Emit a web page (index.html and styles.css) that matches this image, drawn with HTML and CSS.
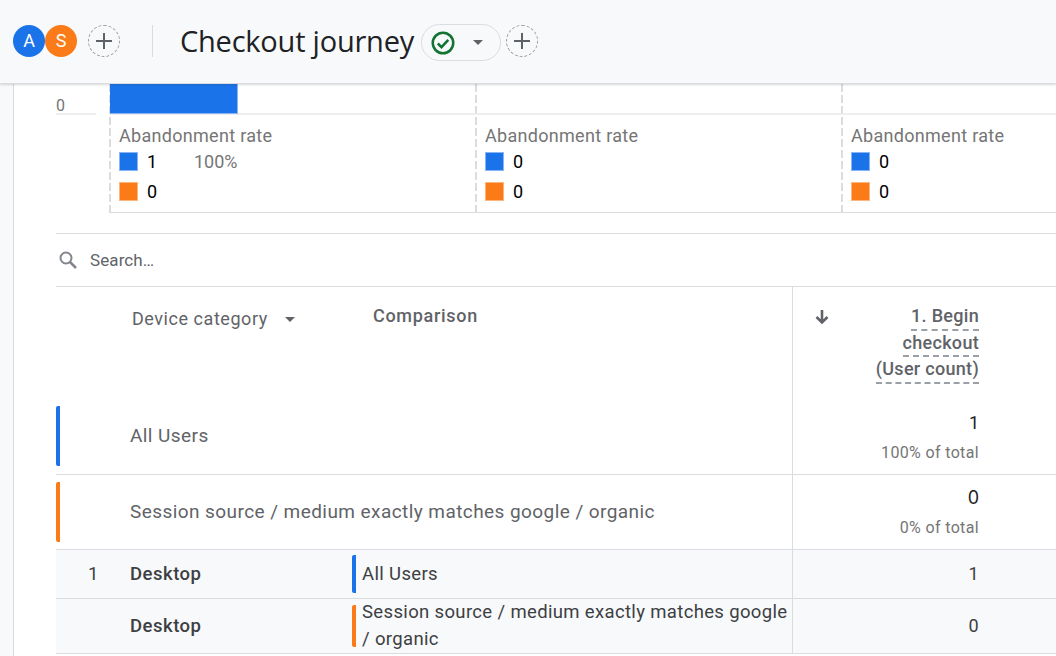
FILE: index.html
```html
<!DOCTYPE html>
<html lang="en">
<head>
    <meta charset="UTF-8">
    <title>Checkout journey</title>
    <link rel="stylesheet" href="styles.css">
</head>
<body>
    <header class="topbar">
        <div class="avatar avatar-blue">A</div>
        <div class="avatar avatar-orange">S</div>
        <div class="add-btn add-first">
            <svg width="18" height="18" viewBox="0 0 18 18"><path d="M9 1v16M1 9h16" stroke="#5f6368" stroke-width="2" fill="none"/></svg>
        </div>
        <div class="topbar-sep"></div>
        <h1 class="title">Checkout journey</h1>
        <div class="status-pill">
            <svg width="24" height="24" viewBox="0 0 24 24"><circle cx="12" cy="12" r="10.250" stroke="#137333" stroke-width="2.500" fill="none"/><path d="M6.800 12.500l3.700 3.700 6.800-7.400" stroke="#137333" stroke-width="2.500" fill="none"/></svg>
            <span class="caret"></span>
        </div>
        <div class="add-btn">
            <svg width="18" height="18" viewBox="0 0 18 18"><path d="M9 1v16M1 9h16" stroke="#5f6368" stroke-width="2" fill="none"/></svg>
        </div>
    </header>

    <div class="page">
        <div class="rail"></div>
        <main class="content">
            <section class="chart">
                <div class="axis"><span class="axis-label">0</span></div>
                <div class="steps">
                    <div class="step">
                        <div class="plot"><div class="bar"></div></div>
                        <div class="legend">
                            <div class="legend-title">Abandonment rate</div>
                            <div class="legend-row"><span class="swatch swatch-blue"></span><span class="legend-num">1</span><span class="legend-pct">100%</span></div>
                            <div class="legend-row"><span class="swatch swatch-orange"></span><span class="legend-num">0</span></div>
                        </div>
                    </div>
                    <div class="step">
                        <div class="plot"></div>
                        <div class="legend">
                            <div class="legend-title">Abandonment rate</div>
                            <div class="legend-row"><span class="swatch swatch-blue"></span><span class="legend-num">0</span></div>
                            <div class="legend-row"><span class="swatch swatch-orange"></span><span class="legend-num">0</span></div>
                        </div>
                    </div>
                    <div class="step">
                        <div class="plot"></div>
                        <div class="legend">
                            <div class="legend-title">Abandonment rate</div>
                            <div class="legend-row"><span class="swatch swatch-blue"></span><span class="legend-num">0</span></div>
                            <div class="legend-row"><span class="swatch swatch-orange"></span><span class="legend-num">0</span></div>
                        </div>
                    </div>
                </div>
            </section>

            <div class="search">
                <svg width="24" height="24" viewBox="0 0 24 24"><circle cx="10" cy="10" r="5.500" stroke="#80868b" stroke-width="2" fill="none"/><path d="M14 14l6 6" stroke="#80868b" stroke-width="2.500" fill="none"/></svg>
                <span class="search-text">Search…</span>
            </div>

            <section class="report">
                <div class="head-row">
                    <div class="head-dim">
                        <span>Device category</span>
                        <span class="caret"></span>
                    </div>
                    <div class="head-comp">Comparison</div>
                    <div class="metric head-metric">
                        <svg class="sort-icon" width="16" height="16" viewBox="0 0 16 16"><path d="M8 1v12M2.500 8L8 13.500 13.500 8" stroke="#5f6368" stroke-width="2.600" fill="none"/></svg>
                        <div class="metric-title">
                            <span>1. Begin</span>
                            <span>checkout</span>
                            <span>(User count)</span>
                        </div>
                    </div>
                </div>

                <div class="total-row total-all">
                    <span class="total-bar bar-blue"></span>
                    <div class="total-label">All Users</div>
                    <div class="metric">
                        <div class="total-num">1</div>
                        <div class="total-share">100% of total</div>
                    </div>
                </div>
                <div class="total-row total-session">
                    <span class="total-bar bar-orange"></span>
                    <div class="total-label">Session source / medium exactly matches google / organic</div>
                    <div class="metric">
                        <div class="total-num total-zero">0</div>
                        <div class="total-share">0% of total</div>
                    </div>
                </div>

                <div class="data-row data-first">
                    <div class="rank">1</div>
                    <div class="dim">Desktop</div>
                    <div class="comp"><span class="comp-bar bar-blue"></span><span class="comp-text">All Users</span></div>
                    <div class="metric data-num">1</div>
                </div>
                <div class="data-row data-second">
                    <div class="rank"></div>
                    <div class="dim">Desktop</div>
                    <div class="comp"><span class="comp-bar bar-orange"></span><span>Session source / medium exactly matches google / organic</span></div>
                    <div class="metric data-num">0</div>
                </div>
            </section>
        </main>
    </div>
</body>
</html>
```

FILE: styles.css
```css
* {
    box-sizing: border-box;
}
html, body {
    margin: 0;
    height: 656px;
    overflow: hidden;
}
body {
    font-family: Roboto, sans-serif;
    color: #202124;
    background: #fff;
}

/* top bar */
.topbar {
    position: relative;
    z-index: 2;
    height: 84px;
    padding-bottom: 2px;
    display: flex;
    align-items: center;
    background: #f8f9fa;
    border-bottom: 1px solid #dadce0;
    box-shadow: 0 1px 2px rgba(60, 64, 67, 0.2);
}
.avatar {
    width: 32px;
    height: 32px;
    border-radius: 50%;
    color: #fff;
    font-size: 18px;
    display: flex;
    align-items: center;
    justify-content: center;
}
.avatar-blue {
    margin-left: 13px;
    background: #1a73e8;
}
.avatar-orange {
    background: #fa7b17;
}
.add-btn {
    width: 32px;
    height: 32px;
    border: 1px dashed #9aa0a6;
    border-radius: 50%;
    display: flex;
    align-items: center;
    justify-content: center;
}
.add-first {
    margin-left: 11px;
}
.topbar-sep {
    width: 1px;
    height: 32px;
    margin: 0 27px 0 32px;
    background: #dadce0;
}
.title {
    margin: 0 7px 0 0;
    font-family: "Open Sans", sans-serif;
    font-size: 29px;
    font-weight: 400;
    letter-spacing: -0.22px;
    color: #202124;
}
.status-pill {
    width: 80px;
    height: 37px;
    margin: 4px 5px 0 0;
    padding-left: 9px;
    display: flex;
    align-items: center;
    gap: 18px;
    border: 1px solid #dadce0;
    border-radius: 19px;
}
.caret {
    display: inline-block;
    width: 0;
    height: 0;
    border-left: 5.500px solid transparent;
    border-right: 5.500px solid transparent;
    border-top: 5.500px solid #5f6368;
}

/* page */
.page {
    display: flex;
    height: 572px;
}
.rail {
    width: 14px;
    background: #f8f9fa;
    border-right: 1px solid #dadce0;
}
.content {
    flex: 1;
    padding-left: 42px;
    overflow: hidden;
}

/* funnel chart */
.chart {
    display: flex;
    height: 129px;
}
.axis {
    width: 40px;
    height: 31px;
    margin-right: 13px;
    border-bottom: 2px solid #eeeeee;
    position: relative;
}
.axis-label {
    position: absolute;
    left: 0;
    bottom: 0;
    font-size: 16px;
    line-height: 14px;
    color: #757575;
}
.steps {
    display: flex;
    flex: 1;
    overflow: hidden;
}
.step {
    flex: 0 0 366px;
    padding-left: 1px;
    background: repeating-linear-gradient(to bottom, #dadce0 0, #dadce0 8px, transparent 8px, transparent 11px) left top / 2px 100% no-repeat;
    border-bottom: 1px solid #dadce0;
}
.plot {
    height: 31px;
    border-bottom: 2px solid #eeeeee;
}
.bar {
    width: 128px;
    height: 30px;
    background: #1a73e8;
    border: 1px solid #8ab4f8;
    border-width: 0 1px 1px 0;
}
.legend {
    padding: 11px 0 0 9px;
}
.legend-title {
    font-size: 18px;
    letter-spacing: 0.3px;
    line-height: 20px;
    color: #757575;
    margin-bottom: 5px;
}
.legend-row {
    display: flex;
    align-items: center;
    height: 20px;
    margin-bottom: 10px;
    font-size: 18px;
}
.swatch {
    width: 19px;
    height: 19px;
    margin-right: 9px;
}
.swatch-blue {
    background: #1a73e8;
    border: 1px solid #8ab4f8;
}
.swatch-orange {
    background: #fa7b17;
    border: 1px solid #fcb77f;
}
.legend-num {
    width: 47px;
    color: #000;
}
.legend-pct {
    color: #757575;
}

/* search row */
.search {
    height: 54px;
    margin-top: 20px;
    display: flex;
    align-items: center;
    border-top: 1px solid #dadce0;
    border-bottom: 1px solid #dadce0;
}
.search-text {
    margin-left: 10px;
    font-size: 17px;
    letter-spacing: 0.1px;
    color: #5f6368;
}

/* table */
.metric {
    flex: 0 0 264px;
    padding-right: 77px;
    border-left: 1px solid #dadce0;
    text-align: right;
}
.head-row {
    display: flex;
    height: 117px;
    color: #5f6368;
}
.head-dim {
    width: 317px;
    padding: 22px 0 0 76px;
    font-size: 18px;
    letter-spacing: 0.55px;
    display: flex;
    align-items: flex-start;
    gap: 17px;
    line-height: 20px;
}
.head-dim .caret {
    margin-top: 8px;
}
.head-comp {
    width: 419px;
    padding-top: 19px;
    font-size: 18px;
    font-weight: 500;
    letter-spacing: 0.7px;
    line-height: 20px;
}
.head-metric {
    display: flex;
    justify-content: space-between;
    padding-left: 21px;
    padding-top: 17px;
}
.sort-icon {
    margin-top: 5px;
}
.metric-title {
    font-size: 18px;
    font-weight: 500;
    letter-spacing: 0.3px;
}
.metric-title span {
    display: block;
    width: fit-content;
    margin-left: auto;
    height: 26.500px;
    line-height: 24px;
    border-bottom: 2px dashed #9aa0a6;
}

.total-row {
    display: flex;
    color: #5f6368;
    font-size: 19px;
    letter-spacing: 0.43px;
}
.total-all {
    height: 71px;
    border-bottom: 1px solid #dadce0;
}
.total-session {
    height: 75px;
    border-bottom: 1px solid #dadce0;
}
.total-bar {
    flex: 0 0 4px;
    border-radius: 2px 0 0 2px;
}
.total-all .total-bar {
    height: 60px;
    margin-top: 2px;
}
.total-session .total-bar {
    height: 60px;
    margin-top: 7px;
}
.bar-blue {
    background: #1a73e8;
}
.bar-orange {
    background: #fa7b17;
}
.total-label {
    flex: 1;
    padding-left: 70px;
}
.total-all .total-label {
    line-height: 64px;
}
.total-session .total-label {
    line-height: 74px;
}
.total-num {
    font-size: 18px;
    color: #202124;
    line-height: 20px;
    letter-spacing: 0;
}
.total-all .metric {
    padding-top: 9px;
}
.total-session .metric {
    padding-top: 13px;
}
.total-zero {
    font-family: Inter, sans-serif;
}
.total-share {
    font-size: 16px;
    letter-spacing: 0.35px;
    line-height: 20px;
    margin-top: 10px;
    color: #757575;
}

.data-row {
    display: flex;
    align-items: stretch;
    background: #f8f9fa;
    border-bottom: 1px solid #dadce0;
    font-size: 18.500px;
    letter-spacing: 0.35px;
}
.data-first {
    height: 49px;
}
.data-second {
    height: 55px;
}
.rank {
    width: 74px;
    padding: 0 0 1px 32px;
    display: flex;
    align-items: center;
    color: #3c4043;
}
.dim {
    width: 222px;
    padding-bottom: 1px;
    display: flex;
    align-items: center;
    font-weight: 500;
    letter-spacing: 0.5px;
    color: #3c4043;
}
.comp {
    width: 440px;
    padding-bottom: 1px;
    display: flex;
    align-items: center;
    gap: 6px;
    color: #3c4043;
    line-height: 27px;
}
.comp-text {
    padding-top: 2px;
}
.comp-bar {
    flex: 0 0 4px;
    border-radius: 2px 0 0 2px;
    height: 38px;
}
.data-second .comp-bar {
    height: 42px;
}
.data-num {
    padding-bottom: 2px;
    display: flex;
    align-items: center;
    justify-content: flex-end;
    font-size: 18px;
    color: #3c4043;
}
```
